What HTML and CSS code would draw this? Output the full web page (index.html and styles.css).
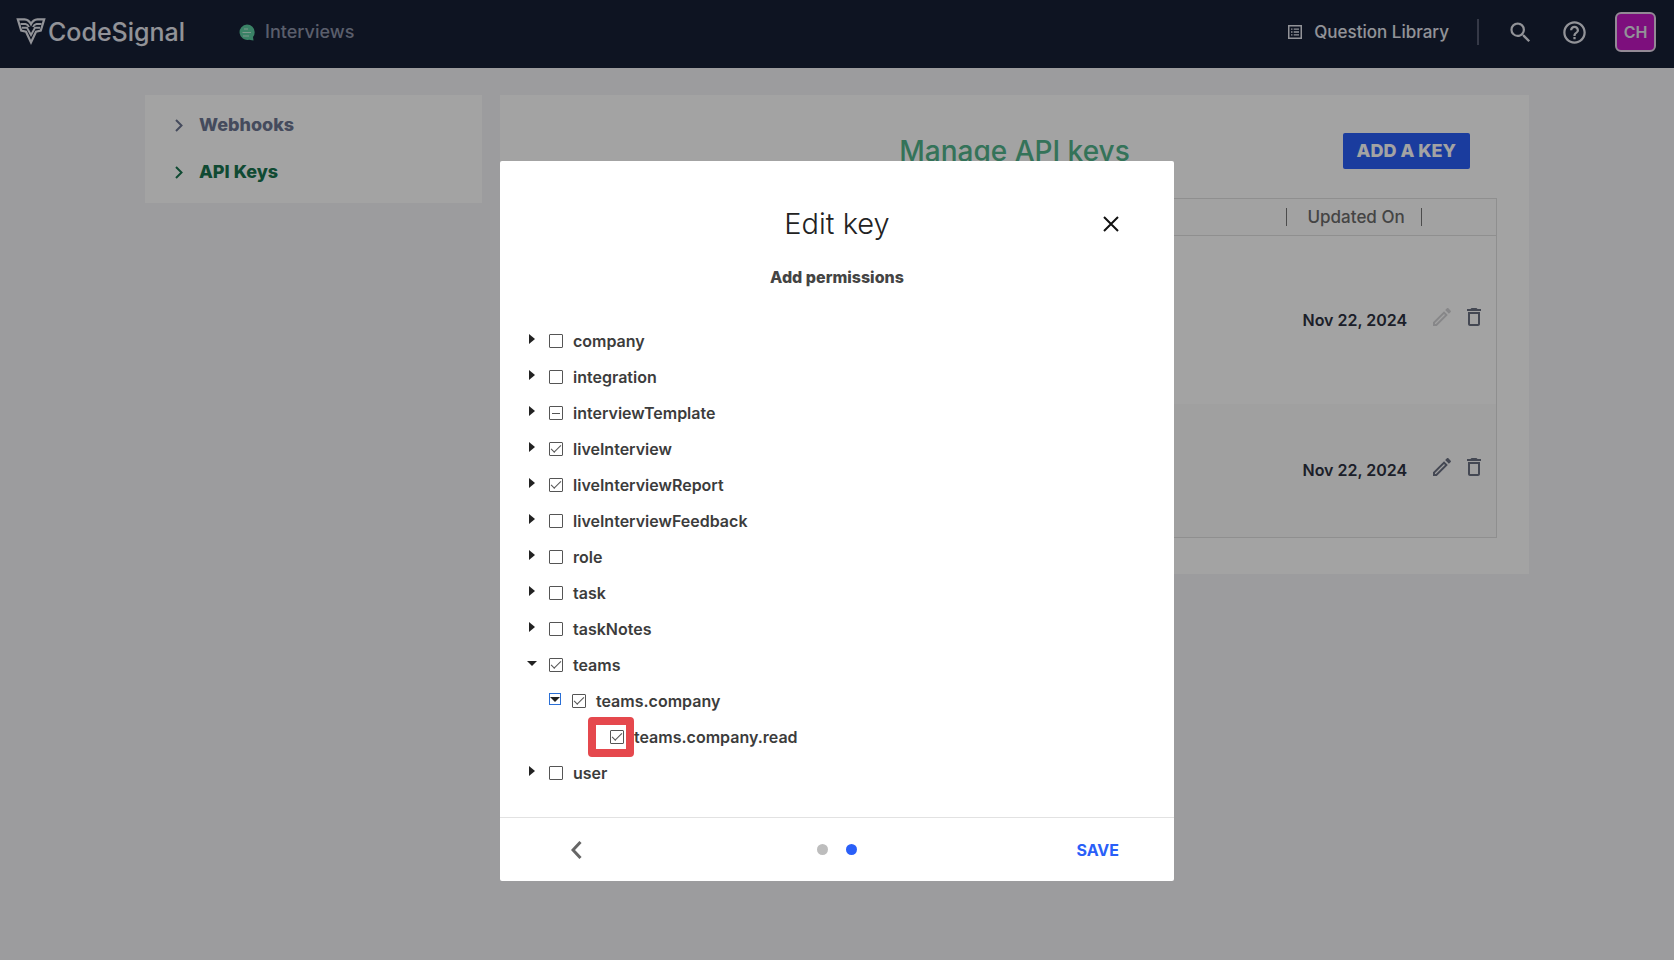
FILE: index.html
```html
<!DOCTYPE html>
<html lang="en">
<head>
<meta charset="UTF-8">
<meta name="viewport" content="width=device-width, initial-scale=1">
<title>API Keys</title>
<link rel="stylesheet" href="styles.css">
</head>
<body>

	<header class="topbar">
		<a class="logo" href="#">
			<svg width="30" height="28" viewBox="0 0 30 28" fill="none" stroke="currentColor" stroke-width="2.2" stroke-linejoin="miter">
				<path d="M1.800 1.300 H8.500 Q13 1.600 15 6 Q17 1.600 21.500 1.300 H28.200 L24.800 12.500 L20 13.800 L15 24.500 L10 13.800 L5.200 12.500 Z"/>
				<path stroke-width="1.900" d="M4.500 6 H9.500 Q12 6.500 13 9 M6 9.800 H11 L15 17 L19 9.800 H24 M25.500 6 H20.500 Q18 6.500 17 9"/>
			</svg>
			<span>CodeSignal</span>
		</a>
		<a class="product" href="#">
			<svg width="16" height="17" viewBox="0 0 16 17">
				<path fill="#5ccba0" d="M8 0.500 A7.700 7.700 0 0 1 15.700 8.200 Q15.700 11 14 13 L14.500 16.500 L10 15.700 A7.700 7.700 0 1 1 8 0.500 Z"/>
				<path stroke="#c4f0dd" stroke-width="1.200" d="M5 5 H9 M3.500 8.500 H12 M4 12 H10"/>
			</svg>
			<span>Interviews</span>
		</a>
		<nav class="tools">
			<a class="library" href="#">
				<svg width="14" height="14" viewBox="0 0 14 14" fill="none" stroke="currentColor">
					<rect x="0.750" y="0.750" width="12.500" height="12.500" stroke-width="1.500"/>
					<path stroke-width="1.300" d="M3 4.200 H4.500 M5.700 4.200 H11 M3 7 H4.500 M5.700 7 H11 M3 9.800 H4.500 M5.700 9.800 H11"/>
				</svg>
				<span>Question Library</span>
			</a>
			<span class="divider"></span>
			<button class="icon-btn" type="button" aria-label="Search">
				<svg width="27" height="27" viewBox="0 0 24 24" fill="currentColor"><path d="M15.500 14h-.79l-.28-.27A6.471 6.471 0 0 0 16 9.500 6.500 6.500 0 1 0 9.500 16c1.610 0 3.090-.59 4.230-1.570l.27.28v.79l5 4.990L20.490 19l-4.990-5zm-6 0C7.010 14 5 11.990 5 9.500S7.010 5 9.500 5 14 7.010 14 9.500 11.990 14 9.500 14z"/></svg>
			</button>
			<button class="icon-btn" type="button" aria-label="Help">
				<svg width="27" height="27" viewBox="0 0 24 24" fill="currentColor"><path d="M11 18h2v-2h-2v2zm1-16C6.480 2 2 6.480 2 12s4.480 10 10 10 10-4.480 10-10S17.520 2 12 2zm0 18c-4.410 0-8-3.590-8-8s3.590-8 8-8 8 3.590 8 8-3.590 8-8 8zm0-14c-2.210 0-4 1.790-4 4h2c0-1.100.9-2 2-2s2 .9 2 2c0 2-3 1.750-3 5h2c0-2.250 3-2.500 3-5 0-2.210-1.790-4-4-4z"/></svg>
			</button>
			<button class="avatar" type="button">CH</button>
		</nav>
	</header>

	<div class="page">
		<nav class="sidebar">
			<a href="#">
				<svg width="8" height="13" viewBox="0 0 8 13" fill="none" stroke="currentColor" stroke-width="2"><path d="M1 1 L6.500 6.500 L1 12"/></svg>
				<span>Webhooks</span>
			</a>
			<a class="active" href="#">
				<svg width="8" height="13" viewBox="0 0 8 13" fill="none" stroke="currentColor" stroke-width="2"><path d="M1 1 L6.500 6.500 L1 12"/></svg>
				<span>API Keys</span>
			</a>
		</nav>

		<main class="card">
			<div class="card-head">
				<h1>Manage API keys</h1>
				<button class="add-key" type="button">ADD A KEY</button>
			</div>
			<table class="keys">
				<thead>
					<tr>
						<th></th>
						<th class="updated">Updated On</th>
						<th class="actions"></th>
					</tr>
				</thead>
				<tbody>
					<tr class="tall">
						<td></td>
						<td class="updated">Nov 22, 2024</td>
						<td class="actions">
							<div>
								<button class="icon-btn" type="button" aria-label="Edit" disabled><svg width="24" height="24" viewBox="0 0 24 24" fill="currentColor"><path d="M14.060 9.020l.92.920L5.920 19H5v-.92l9.060-9.060M17.660 3c-.25 0-.51.100-.70.290l-1.830 1.830 3.750 3.750 1.830-1.830c.39-.39.39-1.020 0-1.410l-2.340-2.340c-.20-.20-.45-.29-.71-.29zm-3.600 3.190L3 17.250V21h3.750L17.810 9.940l-3.750-3.750z"/></svg></button>
								<button class="icon-btn" type="button" aria-label="Delete"><svg width="24" height="24" viewBox="0 0 24 24" fill="currentColor"><path d="M6 19c0 1.100.9 2 2 2h8c1.100 0 2-.9 2-2V7H6v12zM8 9h8v10H8V9zm7.500-5l-1-1h-5l-1 1H5v2h14V4h-3.500z"/></svg></button>
							</div>
						</td>
					</tr>
					<tr class="odd">
						<td></td>
						<td class="updated">Nov 22, 2024</td>
						<td class="actions">
							<div>
								<button class="icon-btn" type="button" aria-label="Edit"><svg width="24" height="24" viewBox="0 0 24 24" fill="currentColor"><path d="M14.060 9.020l.92.920L5.920 19H5v-.92l9.060-9.060M17.660 3c-.25 0-.51.100-.70.290l-1.830 1.830 3.750 3.750 1.830-1.830c.39-.39.39-1.020 0-1.410l-2.340-2.340c-.20-.20-.45-.29-.71-.29zm-3.600 3.190L3 17.250V21h3.750L17.810 9.940l-3.750-3.750z"/></svg></button>
								<button class="icon-btn" type="button" aria-label="Delete"><svg width="24" height="24" viewBox="0 0 24 24" fill="currentColor"><path d="M6 19c0 1.100.9 2 2 2h8c1.100 0 2-.9 2-2V7H6v12zM8 9h8v10H8V9zm7.500-5l-1-1h-5l-1 1H5v2h14V4h-3.500z"/></svg></button>
							</div>
						</td>
					</tr>
				</tbody>
			</table>
		</main>
	</div>

	<div class="overlay">
		<div class="modal" role="dialog" aria-labelledby="dlgtitle">
			<div class="modal-head">
				<h2 id="dlgtitle">Edit key</h2>
				<button class="icon-btn close" type="button" aria-label="Close">
					<svg width="16" height="16" viewBox="0 0 16 16" fill="none" stroke="currentColor" stroke-width="2"><path d="M1 1 L15 15 M15 1 L1 15"/></svg>
				</button>
			</div>
			<h3>Add permissions</h3>

			<ul class="tree">
				<li><div class="node"><button class="toggle" type="button" aria-label="Expand"></button><input type="checkbox" id="company"><label for="company">company</label></div></li>
				<li><div class="node"><button class="toggle" type="button" aria-label="Expand"></button><input type="checkbox" id="integration"><label for="integration">integration</label></div></li>
				<li><div class="node"><button class="toggle" type="button" aria-label="Expand"></button><input type="checkbox" id="interviewTemplate" class="partial"><label for="interviewTemplate">interviewTemplate</label></div></li>
				<li><div class="node"><button class="toggle" type="button" aria-label="Expand"></button><input type="checkbox" id="liveInterview" checked><label for="liveInterview">liveInterview</label></div></li>
				<li><div class="node"><button class="toggle" type="button" aria-label="Expand"></button><input type="checkbox" id="liveInterviewReport" checked><label for="liveInterviewReport">liveInterviewReport</label></div></li>
				<li><div class="node"><button class="toggle" type="button" aria-label="Expand"></button><input type="checkbox" id="liveInterviewFeedback"><label for="liveInterviewFeedback">liveInterviewFeedback</label></div></li>
				<li><div class="node"><button class="toggle" type="button" aria-label="Expand"></button><input type="checkbox" id="role"><label for="role">role</label></div></li>
				<li><div class="node"><button class="toggle" type="button" aria-label="Expand"></button><input type="checkbox" id="task"><label for="task">task</label></div></li>
				<li><div class="node"><button class="toggle" type="button" aria-label="Expand"></button><input type="checkbox" id="taskNotes"><label for="taskNotes">taskNotes</label></div></li>
				<li>
					<div class="node"><button class="toggle open" type="button" aria-label="Collapse"></button><input type="checkbox" id="teams" checked><label for="teams">teams</label></div>
					<ul>
						<li>
							<div class="node"><button class="toggle open focused" type="button" aria-label="Collapse"></button><input type="checkbox" id="teamsCompany" checked><label for="teamsCompany">teams.company</label></div>
							<ul>
								<li><div class="node leaf"><span class="mark"><input type="checkbox" id="teamsCompanyRead" checked></span><label for="teamsCompanyRead">teams.company.read</label></div></li>
							</ul>
						</li>
					</ul>
				</li>
				<li><div class="node"><button class="toggle" type="button" aria-label="Expand"></button><input type="checkbox" id="user"><label for="user">user</label></div></li>
			</ul>

			<div class="modal-foot">
				<button class="icon-btn back" type="button" aria-label="Back">
					<svg width="11" height="18" viewBox="0 0 11 18" fill="none" stroke="currentColor" stroke-width="3"><path d="M9.500 1 L2 9 L9.500 17"/></svg>
				</button>
				<div class="dots"><span></span><span class="on"></span></div>
				<button class="save" type="button">SAVE</button>
			</div>
		</div>
	</div>

</body>
</html>
```
FILE: styles.css
```css
* {
	box-sizing: border-box;
}

body {
	margin: 0;
	min-height: 100vh;
	background: #f4f4f8;
	color: #3c3c3c;
	font-family: Inter, "Liberation Sans", sans-serif;
	font-size: 16px;
	font-weight: 600;
	line-height: 20px;
}

a {
	color: inherit;
	text-decoration: none;
}

button {
	border: 0;
	padding: 0;
	background: none;
	color: inherit;
	font: inherit;
	cursor: pointer;
}

h1, h2, h3, ul {
	margin: 0;
	padding: 0;
}

svg {
	display: block;
	flex: none;
}

.icon-btn {
	display: flex;
	align-items: center;
	justify-content: center;
}

/* top bar */
.topbar {
	display: flex;
	align-items: center;
	height: 68px;
	padding: 0 18px 4px 16px;
	background: #172036;
	color: #e4e6ee;
}

.logo {
	display: flex;
	align-items: center;
	gap: 2px;
	font-size: 25px;
	font-weight: 500;
	line-height: 30px;
}

.product {
	display: flex;
	align-items: center;
	gap: 10px;
	margin-left: 54px;
	color: #8d93a8;
	font-size: 18px;
	font-weight: 500;
}

.tools {
	display: flex;
	align-items: center;
	margin-left: auto;
}

.library {
	display: flex;
	align-items: center;
	gap: 12px;
	font-size: 17px;
	font-weight: 500;
}

.divider {
	width: 2px;
	height: 26px;
	margin: 0 28px;
	background: #535a70;
}

.tools .icon-btn {
	margin-right: 27px;
}

.avatar {
	width: 41px;
	height: 40px;
	border: 2px solid #e4d6ea;
	border-radius: 6px;
	background: #c418c4;
}

/* page */
.page {
	display: flex;
	align-items: flex-start;
	gap: 18px;
	max-width: 1384px;
	margin: 0 auto;
	padding-top: 27px;
}

.sidebar {
	display: flex;
	flex: 0 0 337px;
	flex-direction: column;
	gap: 27px;
	padding: 20px 30px 21px;
	background: #fff;
	color: #6d7692;
	font-size: 18px;
	font-weight: 800;
}

.sidebar a {
	display: flex;
	align-items: center;
	gap: 16px;
}

.sidebar .active {
	color: #197550;
}

.card {
	flex: 1;
	padding: 38px 32px 36px;
	background: #fff;
}

.card-head {
	display: grid;
	grid-template-columns: 1fr auto 1fr;
	align-items: center;
	margin-bottom: 29px;
}

.card-head h1 {
	grid-column: 2;
	color: #52b48c;
	font-size: 28px;
	font-weight: 500;
	line-height: 36px;
}

.add-key {
	justify-self: end;
	height: 36px;
	margin-right: 27px;
	padding: 0 14px;
	border-radius: 2px;
	background: #2a5ff8;
	color: #fff;
	font-size: 18px;
	font-weight: 800;
}

.keys {
	width: 100%;
	border: 1px solid #e0e0e0;
	border-collapse: collapse;
	text-align: left;
}

.keys th {
	height: 37px;
	border-bottom: 1px solid #e0e0e0;
	padding: 0;
	background: #fdfdfd;
	color: #6b6b6b;
	font-size: 17px;
	font-weight: 500;
}

.keys td {
	height: 134px;
	padding: 0;
	color: #2c3140;
}

.keys .tall td {
	height: 168px;
}

.keys .odd td {
	background: #fafafa;
}

.keys .updated {
	width: 135px;
	padding-left: 17px;
}

.keys .actions {
	width: 76px;
}

/* short column rules, like the grid header draws them */
.keys th.updated {
	padding-left: 22px;
}

.keys th.updated, .keys th.actions {
	background: linear-gradient(#777, #777) left center / 1px 18px no-repeat #fdfdfd;
}

.keys .actions div {
	display: flex;
	gap: 8px;
	padding: 0 0 6px 9px;
	color: #6b7183;
}

.keys .icon-btn:disabled {
	color: #d4d4d6;
}

/* dialog */
.overlay {
	position: fixed;
	inset: 0;
	padding-top: 161px;
	background: rgba(0, 0, 0, 0.36);
}

.modal {
	width: 674px;
	max-width: 94%;
	margin: 0 auto;
	border-radius: 2px;
	background: #fff;
}

.modal-head {
	display: grid;
	grid-template-columns: 1fr auto 1fr;
	align-items: center;
	padding: 45px 55px 0;
}

.modal-head h2 {
	grid-column: 2;
	color: #222;
	font-size: 29px;
	font-weight: 300;
	line-height: 36px;
}

.close {
	justify-self: end;
	color: #111;
}

.modal h3 {
	padding: 25px 0 36px;
	color: #444;
	font-size: 16px;
	font-weight: 800;
	text-align: center;
}

.tree, .tree ul {
	list-style: none;
}

.tree {
	padding: 0 24px 26px;
}

.tree ul {
	padding-left: 23px;
}

.node {
	display: flex;
	align-items: center;
	height: 36px;
}

.node label {
	margin-left: 10px;
}

.node input {
	display: grid;
	place-items: center;
	width: 14px;
	height: 14px;
	margin: 0;
	border: 1px solid #555;
	border-radius: 1px;
	appearance: none;
}

.node input:checked::before {
	content: "";
	width: 9px;
	height: 4px;
	margin-bottom: 3px;
	border: solid #555;
	border-width: 0 0 1px 1px;
	transform: rotate(-45deg);
}

.node .partial::before {
	content: "";
	width: 8px;
	height: 1px;
	background: #555;
}

.toggle {
	display: flex;
	align-items: center;
	justify-content: center;
	width: 16px;
	height: 12px;
	margin: 0 9px 4px 0;
}

.toggle::before {
	content: "";
	border: solid transparent;
	border-width: 5px 0 5px 6px;
	border-left-color: #222;
}

.toggle.open::before {
	border: solid transparent;
	border-width: 5px 5px 0;
	border-top-color: #222;
}

.toggle.focused {
	width: 12px;
	margin: 0 11px 4px 2px;
	border: 1px solid #2a6fd6;
}

/* callout around the last permission */
.leaf .mark {
	position: relative;
	margin-left: 40px;
}

.leaf .mark::after {
	content: "";
	position: absolute;
	inset: -13px -10px -13px -22px;
	border: 8px solid #e5484d;
	border-radius: 4px;
	pointer-events: none;
}

.modal-foot {
	display: grid;
	grid-template-columns: 1fr auto 1fr;
	align-items: center;
	height: 64px;
	padding: 0 55px;
	border-top: 1px solid #e2e2e2;
}

.back {
	justify-self: start;
	margin-left: 16px;
	color: #666;
}

.dots {
	display: flex;
	gap: 18px;
}

.dots span {
	width: 11px;
	height: 11px;
	border-radius: 50%;
	background: #bdbdbd;
}

.dots .on {
	background: #2a5ff8;
}

.save {
	justify-self: end;
	color: #2a5ff8;
	font-weight: 700;
}
```
